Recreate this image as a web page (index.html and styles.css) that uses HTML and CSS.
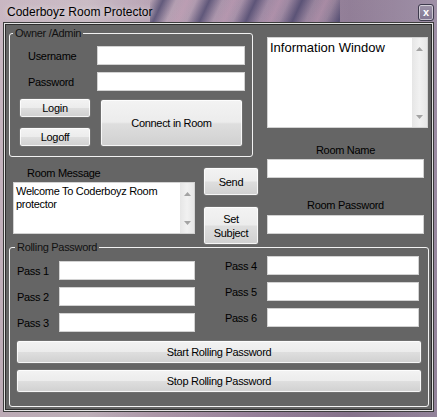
FILE: index.html
```html
<!DOCTYPE html>
<html>
<head>
<meta charset="utf-8">
<link rel="stylesheet" href="styles.css">
</head>
<body>
<div class="window">
  <div class="titlebar">
    <span class="title">Coderboyz Room Protector</span>
    <span class="close">x</span>
  </div>
  <div class="client">
    <div class="top">
      <div class="left">
        <fieldset class="group owner">
          <legend>Owner /Admin</legend>
          <div class="field-row"><span class="flabel">Username</span><span class="tb w148"></span></div>
          <div class="field-row"><span class="flabel">Password</span><span class="tb w148"></span></div>
          <div class="owner-buttons">
            <div class="login-col">
              <button class="btn login">Login</button>
              <button class="btn logoff">Logoff</button>
            </div>
            <button class="btn connect">Connect in Room</button>
          </div>
        </fieldset>
        <div class="msg-row">
          <div class="msg">
            <div class="msg-label">Room Message</div>
            <div class="memo msgbox">
              <div class="memo-text">Welcome To Coderboyz Room protector</div>
              <div class="vscroll">
                <span class="arrow"><svg width="7" height="4" viewBox="0 0 7 4"><path d="M0 4L3.5 0L7 4Z" fill="#a3a3a3"/></svg></span>
                <span class="arrow"><svg width="7" height="4" viewBox="0 0 7 4"><path d="M0 0L3.5 4L7 0Z" fill="#a3a3a3"/></svg></span>
              </div>
            </div>
          </div>
          <div class="msg-buttons">
            <button class="btn send">Send</button>
            <button class="btn subject">Set<br>Subject</button>
          </div>
        </div>
      </div>
      <div class="right">
        <div class="memo info">
          <div class="memo-text info-text">Information Window</div>
          <div class="vscroll wide">
            <span class="arrow"><svg width="7" height="4" viewBox="0 0 7 4"><path d="M0 4L3.5 0L7 4Z" fill="#a3a3a3"/></svg></span>
            <span class="arrow"><svg width="7" height="4" viewBox="0 0 7 4"><path d="M0 0L3.5 4L7 0Z" fill="#a3a3a3"/></svg></span>
          </div>
        </div>
        <div class="rlabel first">Room Name</div>
        <div class="tb rinput name"></div>
        <div class="rlabel second">Room Password</div>
        <div class="tb rinput pass"></div>
      </div>
    </div>
    <fieldset class="group rolling">
      <legend>Rolling Password</legend>
      <div class="pass-cols">
        <div class="pass-col leftcol">
          <div class="pass-row"><span class="plabel">Pass 1</span><span class="tb w136"></span></div>
          <div class="pass-row"><span class="plabel">Pass 2</span><span class="tb w136"></span></div>
          <div class="pass-row"><span class="plabel">Pass 3</span><span class="tb w136"></span></div>
        </div>
        <div class="pass-col rightcol">
          <div class="pass-row"><span class="plabel">Pass 4</span><span class="tb w152"></span></div>
          <div class="pass-row"><span class="plabel">Pass 5</span><span class="tb w152"></span></div>
          <div class="pass-row"><span class="plabel">Pass 6</span><span class="tb w152"></span></div>
        </div>
      </div>
      <button class="btn wide-btn">Start Rolling Password</button>
      <button class="btn wide-btn stop">Stop Rolling Password</button>
    </fieldset>
  </div>
</div>
</body>
</html>
```

FILE: styles.css
```css
html, body {
  margin: 0;
  padding: 0;
}

body {
  font-family: "Liberation Sans", Arial, sans-serif;
  background: #8f7f96;
}

.window {
  width: 437px;
  height: 417px;
  overflow: hidden;
  box-sizing: border-box;
  background:
    repeating-linear-gradient(115deg, rgba(70, 66, 105, 0) 0px, rgba(70, 66, 105, 0.75) 12px, rgba(70, 66, 105, 0) 24px, rgba(210, 160, 185, 0.3) 34px, rgba(70, 66, 105, 0) 42px) 150px 0 / 190px 24px no-repeat,
    linear-gradient(180deg, rgba(255, 255, 255, 0.05), rgba(0, 0, 0, 0.05)),
    linear-gradient(90deg, #c6b3bf 0%, #c7b8c2 20%, #b59fb1 35%, #9c85a0 60%, #8c7892 80%, #9a8aa2 100%);
}

.titlebar {
  height: 24px;
  display: flex;
  justify-content: space-between;
  align-items: flex-start;
}

.title {
  padding-left: 7px;
  font-size: 12px;
  line-height: 24px;
  color: #000;
  text-shadow: 0 0 6px rgba(255, 255, 255, 0.7);
}

.close {
  margin-top: 4px;
  margin-right: 3px;
  width: 16px;
  height: 17px;
  box-sizing: border-box;
  border: 1px solid #3d3a4c;
  border-radius: 3px;
  box-shadow: inset 0 0 0 1px rgba(255, 255, 255, 0.55);
  background: linear-gradient(#9d93a8, #7f7590);
  color: #fff;
  font-size: 11px;
  font-weight: bold;
  line-height: 14px;
  text-align: center;
}

.client {
  margin: 0 5px;
  width: 425px;
  height: 384px;
  background: #656565;
  border: 1px solid #2d2d2d;
  box-shadow: 0 0 0 1px #e4e4e4, 0 0 0 2px #3c3c3c;
  color: #000;
  font-size: 11px;
  letter-spacing: -0.3px;
}

.top {
  display: flex;
  height: 216px;
}

.left {
  width: 261px;
}

.right {
  width: 161px;
}

/* group boxes */
.group {
  margin: 0;
  padding: 0;
  border: 1px solid #f2f2f2;
  border-radius: 3px;
  box-sizing: border-box;
  min-width: 0;
}

.group legend {
  padding: 0 2px;
  margin-left: 3px;
  font-size: 11px;
  line-height: 12px;
  color: #111;
}

.owner {
  margin: 2px 0 0 3px;
  width: 244px;
  height: 130px;
}

.field-row {
  display: flex;
  align-items: center;
  height: 19px;
  margin-top: 7px;
}

.flabel {
  width: 87px;
  box-sizing: border-box;
  padding-left: 18px;
}

.tb {
  display: block;
  background: #fff;
  border: 1px solid #d2d2d2;
  box-sizing: border-box;
  height: 19px;
}

.w148 { width: 148px; }
.w136 { width: 136px; }
.w152 { width: 152px; }

.owner-buttons {
  display: flex;
  margin-top: 7px;
  padding-left: 9px;
}

.login-col {
  display: flex;
  flex-direction: column;
  width: 72px;
}

/* buttons */
.btn {
  display: block;
  margin: 0;
  padding: 0;
  box-sizing: border-box;
  font-family: "Liberation Sans", Arial, sans-serif;
  font-size: 11px;
  letter-spacing: -0.3px;
  color: #000;
  border: 1px solid #707070;
  border-radius: 3px;
  background: linear-gradient(180deg, #f3f3f3 0%, #ececec 48%, #dedede 52%, #d0d0d0 100%);
  box-shadow: inset 0 0 0 1px rgba(255, 255, 255, 0.8);
}

.login, .logoff {
  width: 72px;
  height: 20px;
}

.logoff {
  margin-top: 9px;
}

.connect {
  margin: 1px 0 0 9px;
  width: 143px;
  height: 48px;
}

/* room message */
.msg-row {
  display: flex;
  margin-top: 10px;
}

.msg {
  margin-left: 7px;
  width: 182px;
}

.msg-label {
  line-height: 12px;
  padding-left: 14px;
}

.memo {
  display: flex;
  background: #fff;
  border: 1px solid #d2d2d2;
  box-sizing: border-box;
}

.msgbox {
  margin-top: 3px;
  height: 52px;
}

.memo-text {
  flex: 1;
  padding: 2px 2px 0 2px;
  line-height: 13px;
}

.vscroll {
  width: 14px;
  background: linear-gradient(90deg, #e6e6e6, #f1f1f1 50%, #e6e6e6);
  display: flex;
  flex-direction: column;
  justify-content: space-between;
}

.vscroll.wide {
  width: 15px;
}

.arrow {
  height: 21px;
  display: flex;
  align-items: center;
  justify-content: center;
}

.msg-buttons {
  margin-left: 8px;
  display: flex;
  flex-direction: column;
}

.send {
  width: 56px;
  height: 29px;
}

.subject {
  margin-top: 10px;
  width: 56px;
  height: 39px;
  line-height: 14px;
}

/* right column */
.info {
  margin-top: 12px;
  width: 161px;
  height: 91px;
}

.info-text {
  font-size: 13px;
  letter-spacing: 0;
  line-height: 16px;
  padding: 2px 0 0 2px;
}

.rlabel {
  width: 157px;
  text-align: center;
  line-height: 14px;
  height: 14px;
}

.rlabel.first {
  margin-top: 15px;
}

.rlabel.second {
  margin-top: 20px;
}

.rinput {
  width: 157px;
}

.rinput.name {
  margin-top: 2px;
}

.rinput.pass {
  margin-top: 3px;
}

/* rolling */
.rolling {
  margin-left: 3px;
  width: 420px;
  height: 166px;
}

.rolling legend {
  margin-left: 5px;
}

.pass-cols {
  display: flex;
  height: 87px;
}

.pass-col {
  display: flex;
  flex-direction: column;
  gap: 7px;
}

.leftcol {
  padding: 8px 0 0 7px;
}

.rightcol {
  padding: 3px 0 0 30px;
}

.pass-row {
  display: flex;
  align-items: center;
  height: 19px;
}

.plabel {
  width: 42px;
}

.wide-btn {
  margin-left: 6px;
  width: 406px;
  height: 24px;
}

.wide-btn.stop {
  margin-top: 5px;
}
```
